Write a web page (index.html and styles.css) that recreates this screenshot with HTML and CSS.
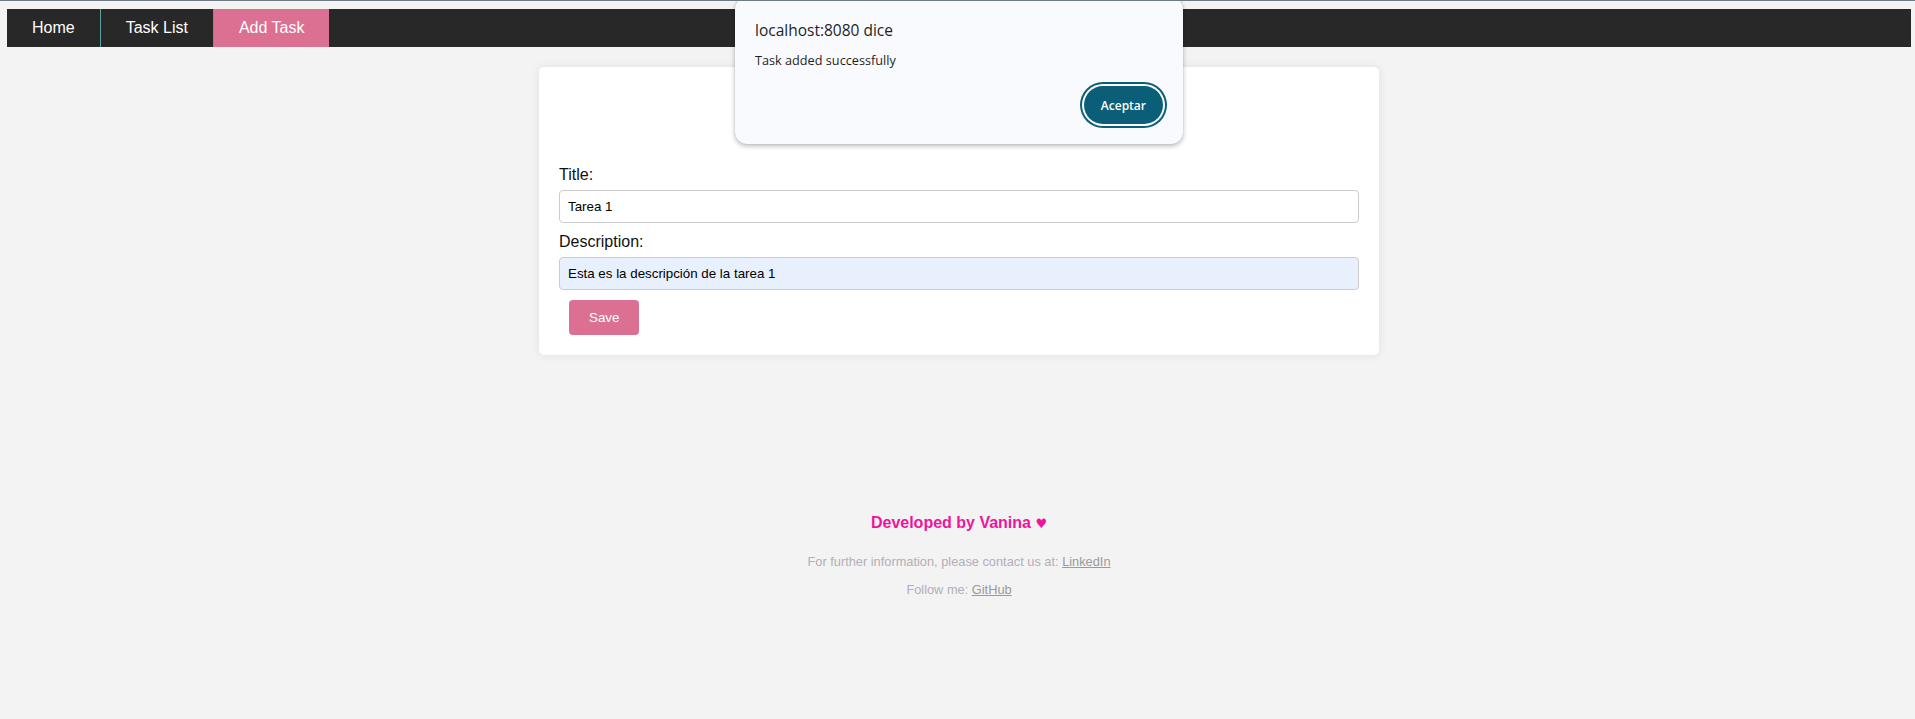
FILE: index.html
```html
<!DOCTYPE html>
<html lang="en">
<head>
<meta charset="utf-8">
<title>Add Task</title>
<link rel="stylesheet" href="styles.css">
</head>
<body>
  <nav class="navbar">
    <a class="nav-link" href="#">Home</a>
    <a class="nav-link" href="#">Task List</a>
    <a class="nav-link active" href="#">Add Task</a>
  </nav>

  <main class="card">
    <h1 class="card-title">Add Task</h1>
    <form class="task-form">
      <label class="form-label" for="title">Title:</label>
      <input class="form-input" id="title" type="text" value="Tarea 1">
      <label class="form-label" for="description">Description:</label>
      <input class="form-input autofilled" id="description" type="text" value="Esta es la descripción de la tarea 1">
      <button class="save-btn" type="button">Save</button>
    </form>
  </main>

  <footer class="footer">
    <p class="dev">Developed by Vanina <span class="heart">♥</span></p>
    <p class="info">For further information, please contact us at: <a href="#">LinkedIn</a></p>
    <p class="info">Follow me: <a href="#">GitHub</a></p>
  </footer>

  <div class="alert-dialog">
    <div class="alert-title">localhost:8080 dice</div>
    <div class="alert-message">Task added successfully</div>
    <div class="alert-actions">
      <button class="alert-btn" type="button">Aceptar</button>
    </div>
  </div>
</body>
</html>
```

FILE: styles.css
```css
html, body {
  height: 100%;
}

body {
  margin: 0;
  padding: 8px 4px 8px 7px;
  border-top: 1px solid #6d7b85;
  background: #f3f3f3;
  font-family: "Liberation Sans", Arial, sans-serif;
  box-sizing: border-box;
  position: relative;
}

.navbar {
  display: flex;
  background: #282828;
}

.nav-link {
  color: #ffffff;
  text-decoration: none;
  font-size: 16px;
  line-height: 18px;
  padding: 10px 25px;
  border-right: 1px solid #5f9ea0;
}

.nav-link.active {
  background: #db7093;
  border-right: none;
}

.card {
  width: 800px;
  margin: 20px auto 0;
  padding: 20px;
  background: #ffffff;
  border-radius: 5px;
  box-shadow: 0 0 10px rgba(0, 0, 0, 0.08);
}

.card-title {
  text-align: center;
  font-size: 32px;
  margin: 21px 0 21px;
  color: #333;
}

.task-form {
  display: flex;
  flex-direction: column;
  align-items: flex-start;
}

.form-label {
  font-size: 16px;
  line-height: 18px;
  color: #111;
  margin-bottom: 6px;
}

.form-input {
  box-sizing: border-box;
  width: 100%;
  height: 33px;
  padding: 8px;
  border: 1px solid #cccccc;
  border-radius: 4px;
  font-family: "Liberation Sans", Arial, sans-serif;
  font-size: 13.33px;
  color: #000;
  background: #ffffff;
  margin: 0 0 10px;
}

.form-input.autofilled {
  background: #e8f0fe;
  margin-bottom: 0;
}

.save-btn {
  margin: 10px 0 0 10px;
  padding: 10px 20px;
  height: 35px;
  border: none;
  border-radius: 4px;
  background: #db7093;
  color: #ffffff;
  font-family: "Liberation Sans", Arial, sans-serif;
  font-size: 13.33px;
}

.footer {
  text-align: center;
  margin-top: 159px;
}

.dev {
  margin: 0 0 22px;
  font-size: 16px;
  font-weight: bold;
  color: #f0149c;
}

.heart {
  font-family: "DejaVu Sans", sans-serif;
  font-size: 13px;
}

.info {
  margin: 0 0 12.5px;
  font-size: 12.8px;
  color: #b4aeb8;
}

.info a {
  color: #9a9a9a;
  text-decoration: underline;
}

.alert-dialog {
  position: absolute;
  top: -4px;
  left: 735px;
  width: 448px;
  box-sizing: border-box;
  padding: 23px 20px 20px 20px;
  background: #f8fafd;
  border-radius: 12px;
  box-shadow: 0 2px 5px rgba(0, 0, 0, 0.28), 0 0 1px rgba(0, 0, 0, 0.2);
  font-family: "Open Sans", "Noto Sans", sans-serif;
  color: #1f1f1f;
}

.alert-title {
  font-size: 15.5px;
  line-height: 20px;
  font-weight: 500;
}

.alert-message {
  margin-top: 12px;
  font-size: 12.7px;
  line-height: 16px;
}

.alert-actions {
  display: flex;
  justify-content: flex-end;
  margin-top: 18px;
}

.alert-btn {
  height: 38px;
  padding: 0 17px;
  border: none;
  border-radius: 19px;
  background: #0a5e78;
  color: #ffffff;
  font-family: "Open Sans", "Noto Sans", sans-serif;
  font-size: 12px;
  font-weight: 600;
  box-shadow: 0 0 0 2px #ffffff, 0 0 0 4px #0a5e78;
}
```
